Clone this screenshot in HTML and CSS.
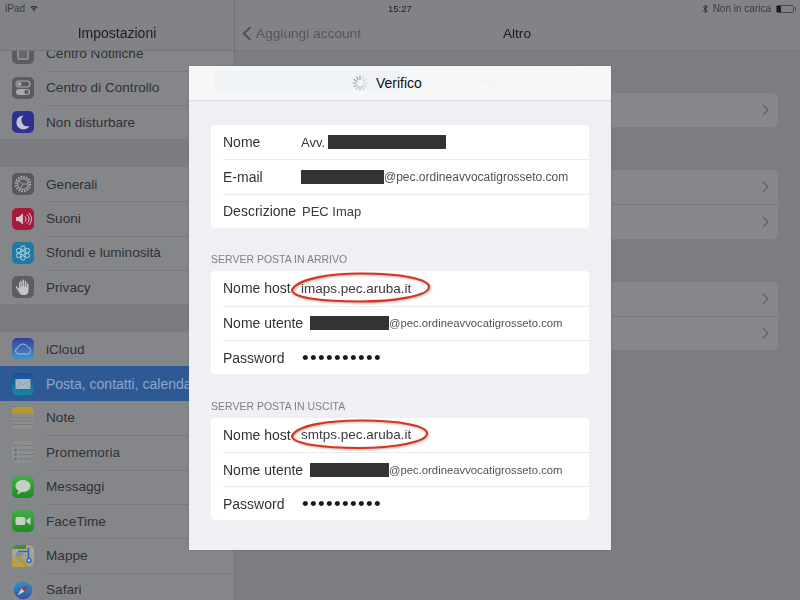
FILE: index.html
```html
<!DOCTYPE html>
<html lang="it">
<head>
<meta charset="utf-8">
<title>Impostazioni</title>
<link rel="stylesheet" href="styles.css">
</head>
<body>
<div class="screen">
  <aside class="sidebar">
    <header class="side-head">
      <div class="status status-left">
        <span>iPad</span>
        <svg class="wifi" viewBox="0 0 10 8"><path d="M0.5 2.6C3 .4 7 .4 9.5 2.6L8.6 3.6C6.6 1.9 3.4 1.9 1.4 3.6ZM2.3 4.5C3.9 3.2 6.1 3.2 7.7 4.5L6.8 5.4C5.7 4.6 4.3 4.6 3.2 5.4ZM5 7.6L3.9 6.4C4.6 5.9 5.4 5.9 6.1 6.4Z"/></svg>
      </div>
      <div class="nav-title">Impostazioni</div>
    </header>
    <div class="side-list">
      <div class="group group-first">
        <div class="item"><svg class="icon" viewBox="0 0 22 22"><rect width="22" height="22" rx="5" fill="#5b5c5f"/><rect x="5" y="4" width="12" height="14" rx="2" fill="#8a8b8d"/><rect x="7" y="6" width="8" height="10" fill="#66676a"/></svg><span class="label">Centro Notifiche</span></div>
        <div class="item"><svg class="icon" viewBox="0 0 22 22"><rect width="22" height="22" rx="5" fill="#5b5c5f"/><rect x="4" y="4" width="14" height="6" rx="3" fill="none" stroke="#a9aaac" stroke-width="1.2"/><circle cx="7.5" cy="7" r="2" fill="#a9aaac"/><rect x="4" y="12" width="14" height="6" rx="3" fill="#a9aaac"/><circle cx="14.5" cy="15" r="2.2" fill="#5b5c5f"/></svg><span class="label">Centro di Controllo</span></div>
        <div class="item"><svg class="icon" viewBox="0 0 22 22"><rect width="22" height="22" rx="5" fill="#2f3190"/><path d="M11.5 4.5A7 7 0 1 0 17.5 15A6.2 6.2 0 0 1 11.5 4.5Z" fill="#c4c5d6"/></svg><span class="label">Non disturbare</span></div>
      </div>
      <div class="group">
        <div class="item"><svg class="icon" viewBox="0 0 22 22"><rect width="22" height="22" rx="5" fill="#58595c"/><circle cx="11" cy="11" r="7" fill="none" stroke="#a3a4a6" stroke-width="2.6" stroke-dasharray="1.6 1.15"/><circle cx="11" cy="11" r="5.2" fill="none" stroke="#a3a4a6" stroke-width="1"/><path d="M11 11L6.8 8M11 11L15.8 11M11 11L8.5 15.4" stroke="#a3a4a6" stroke-width=".9"/></svg><span class="label">Generali</span></div>
        <div class="item"><svg class="icon" viewBox="0 0 22 22"><rect width="22" height="22" rx="5" fill="#a81a3c"/><path d="M4 9H6.5L11 5.5V16.5L6.5 13H4Z" fill="#d8c5cb"/><path d="M13 8.5A3.5 3.5 0 0 1 13 13.5M15 6.5A6 6 0 0 1 15 15.5M17 5A8.5 8.5 0 0 1 17 17" fill="none" stroke="#d8c5cb" stroke-width="1"/></svg><span class="label">Suoni</span></div>
        <div class="item"><svg class="icon" viewBox="0 0 22 22"><rect width="22" height="22" rx="5" fill="#1f7ba6"/><g fill="none" stroke="#b9d3df" stroke-width="1"><circle cx="11" cy="11" r="2"/><circle cx="11" cy="6" r="2.2"/><circle cx="11" cy="16" r="2.2"/><circle cx="6.6" cy="8.5" r="2.2"/><circle cx="15.4" cy="8.5" r="2.2"/><circle cx="6.6" cy="13.5" r="2.2"/><circle cx="15.4" cy="13.5" r="2.2"/></g></svg><span class="label">Sfondi e luminosità</span></div>
        <div class="item"><svg class="icon" viewBox="0 0 22 22"><rect width="22" height="22" rx="5" fill="#5d5e61"/><path d="M7 6.5V13L5 10.5C4.2 9.8 3.4 10.6 4 11.5L7.5 17C8.3 18.3 9.5 19 11 19H12.5C15 19 16.5 17.2 16.5 15V8C16.5 6.9 15 6.9 15 8V11H14.4V5.5C14.4 4.4 12.9 4.4 12.9 5.5V10.5H12.2V4.2C12.2 3.1 10.6 3.1 10.6 4.2V10.5H9.9V5.5C9.9 4.4 8.4 4.4 8.4 5.5V11.5H7.9V6.5C7.9 5.7 7 5.7 7 6.5Z" fill="#c4c5c6"/></svg><span class="label">Privacy</span></div>
      </div>
      <div class="group">
        <div class="item"><svg class="icon" viewBox="0 0 22 22"><defs><linearGradient id="gc" x1="0" y1="0" x2="0" y2="1"><stop offset="0" stop-color="#3340a0"/><stop offset="1" stop-color="#4b97c6"/></linearGradient></defs><rect width="22" height="22" rx="5" fill="url(#gc)"/><path d="M6.500 16A3.200 3.200 0 0 1 6 9.700A5.200 5.200 0 0 1 15.800 9.200A3.500 3.500 0 0 1 16 16Z" fill="none" stroke="#a8bed9" stroke-width="1"/></svg><span class="label">iCloud</span></div>
        <div class="item item-active"><svg class="icon" viewBox="0 0 22 22"><defs><linearGradient id="gm" x1="0" y1="0" x2="0" y2="1"><stop offset="0" stop-color="#1b4d9c"/><stop offset="1" stop-color="#118ba0"/></linearGradient></defs><rect width="22" height="22" rx="5" fill="url(#gm)"/><rect x="3.500" y="6" width="15" height="10" fill="#a9b6c4"/><path d="M3.500 6L11 12L18.500 6M3.500 16L8.500 10.500M18.500 16L13.500 10.500" fill="none" stroke="#7f93a8" stroke-width=".7"/></svg><span class="label label-active">Posta, contatti, calendari</span></div>
        <div class="item"><svg class="icon" viewBox="0 0 22 22"><rect width="22" height="22" rx="5" fill="#8d8e90"/><path d="M0 6V5A5 5 0 0 1 5 0H17A5 5 0 0 1 22 5V6Z" fill="#b89a2c"/><path d="M0 10.500H22M0 14H22M0 17.500H22" stroke="#76777a" stroke-width=".8"/></svg><span class="label">Note</span></div>
        <div class="item"><svg class="icon" viewBox="0 0 22 22"><rect width="22" height="22" rx="5" fill="#8d8e90"/><circle cx="3.500" cy="4.500" r="1.300" fill="#b9722a"/><circle cx="3.500" cy="9" r="1.300" fill="#2e80b8"/><circle cx="3.500" cy="13.500" r="1.300" fill="#3c9a3a"/><circle cx="3.500" cy="18" r="1.300" fill="#8f4ca8"/><path d="M7 4.500H22M7 9H22M7 13.500H22M7 18H22" stroke="#717275" stroke-width=".8"/></svg><span class="label">Promemoria</span></div>
        <div class="item"><svg class="icon" viewBox="0 0 22 22"><defs><linearGradient id="gg" x1="0" y1="0" x2="0" y2="1"><stop offset="0" stop-color="#45a94a"/><stop offset="1" stop-color="#1d8f22"/></linearGradient></defs><rect width="22" height="22" rx="5" fill="url(#gg)"/><path d="M11 4C6.800 4 3.500 6.600 3.500 10C3.500 12 4.700 13.700 6.500 14.800C6.400 16 5.800 17.200 4.800 18C6.600 17.900 8.200 17.100 9.300 15.900C9.900 16 10.400 16 11 16C15.200 16 18.500 13.400 18.500 10C18.500 6.600 15.200 4 11 4Z" fill="#c6cec6"/></svg><span class="label">Messaggi</span></div>
        <div class="item"><svg class="icon" viewBox="0 0 22 22"><rect width="22" height="22" rx="5" fill="url(#gg)"/><rect x="3.500" y="7" width="10" height="8" rx="2" fill="#c6cec6"/><path d="M14.500 10L18.500 7V15L14.500 12Z" fill="#c6cec6"/></svg><span class="label">FaceTime</span></div>
        <div class="item"><svg class="icon" viewBox="0 0 22 22"><rect width="22" height="22" rx="5" fill="#a4a091"/><path d="M0 5A5 5 0 0 1 5 0H14V4H0Z" fill="#4a8a3a"/><path d="M0 4H22V9H0Z" fill="#a8a8a0"/><path d="M0 12L12 22H3A3 3 0 0 1 0 19Z" fill="#b8a238"/><path d="M3 11L13 22H17L6 9Z" fill="#b09a30"/><path d="M14 0V4H16V0Z" fill="#b4a640"/><path d="M16.500 3V15" stroke="#2a66b0" stroke-width="1.500"/><path d="M6 6.500H16.500" stroke="#2a66b0" stroke-width="1.500"/><ellipse cx="7.500" cy="9" rx="3.600" ry="2.200" fill="#7c8fb8"/><circle cx="17" cy="15.500" r="2" fill="#c6cad2" stroke="#1f5aa8" stroke-width="1.200"/></svg><span class="label">Mappe</span></div>
        <div class="item"><svg class="icon" viewBox="0 0 22 22"><defs><linearGradient id="gs" x1="0" y1="0" x2="0" y2="1"><stop offset="0" stop-color="#2f96c8"/><stop offset="1" stop-color="#3552a8"/></linearGradient></defs><rect width="22" height="22" rx="5" fill="#88898b"/><circle cx="11" cy="11" r="9.300" fill="url(#gs)"/><path d="M16.500 5.500L9.500 9.500L12.500 12.500Z" fill="#b8302a"/><path d="M5.500 16.500L9.500 9.500L12.500 12.500Z" fill="#c9ccd2"/></svg><span class="label">Safari</span></div>
      </div>
    </div>
  </aside>

  <main class="pane">
    <header class="pane-head">
      <div class="status status-bar">
        <span class="time">15:27</span>
        <span class="status-right">
          <svg class="bt" viewBox="0 0 8 12"><path d="M1 3.200L6.200 8.400L3.800 10.800V1.200L6.200 3.600L1 8.800" fill="none" stroke="#2d2e30" stroke-width="1.100"/></svg>
          <span>Non in carica</span>
          <span class="battery"><span class="battery-level"></span></span>
        </span>
      </div>
      <div class="pane-nav">
        <div class="back">
          <svg class="back-icon" viewBox="0 0 10 16"><path d="M8.600 1.200L1.600 8L8.600 14.800" fill="none" stroke="#4c4d50" stroke-width="2"/></svg>
          <span>Aggiungi account</span>
        </div>
        <div class="pane-title">Altro</div>
      </div>
    </header>
    <div class="pane-body">
      <div class="bg-card"><div class="bg-row"><svg class="chev" viewBox="0 0 7 12"><path d="M1 1L6 6L1 11" fill="none" stroke="#626366" stroke-width="1.300"/></svg></div></div>
      <div class="bg-card"><div class="bg-row"><svg class="chev" viewBox="0 0 7 12"><path d="M1 1L6 6L1 11" fill="none" stroke="#626366" stroke-width="1.300"/></svg></div><div class="bg-row bg-row-next"><svg class="chev" viewBox="0 0 7 12"><path d="M1 1L6 6L1 11" fill="none" stroke="#626366" stroke-width="1.300"/></svg></div></div>
      <div class="bg-card"><div class="bg-row"><svg class="chev" viewBox="0 0 7 12"><path d="M1 1L6 6L1 11" fill="none" stroke="#626366" stroke-width="1.300"/></svg></div><div class="bg-row bg-row-next"><svg class="chev" viewBox="0 0 7 12"><path d="M1 1L6 6L1 11" fill="none" stroke="#626366" stroke-width="1.300"/></svg></div></div>
    </div>
  </main>

  <section class="modal">
    <header class="modal-head">
      <div class="segments">
        <span class="seg seg-on">IMAP</span>
        <span class="seg seg-off">POP</span>
      </div>
      <div class="modal-title">
        <svg class="spinner" viewBox="0 0 16 16"><g stroke="#8f8f92" stroke-width="1.100" stroke-linecap="round"><path d="M8 1V4.200"/><path d="M11.500 2L9.900 4.700" opacity=".25"/><path d="M14 4.500L11.300 6.100" opacity=".3"/><path d="M15 8H11.800" opacity=".35"/><path d="M14 11.500L11.300 9.900" opacity=".4"/><path d="M11.500 14L9.900 11.300" opacity=".5"/><path d="M8 15V11.800" opacity=".6"/><path d="M4.500 14L6.100 11.300" opacity=".7"/><path d="M2 11.500L4.700 9.900" opacity=".8"/><path d="M1 8H4.200" opacity=".85"/><path d="M2 4.500L4.700 6.100" opacity=".9"/><path d="M4.500 2L6.100 4.700" opacity=".95"/></g></svg>
        <span>Verifico</span>
      </div>
    </header>
    <div class="modal-body">
      <div class="card">
        <div class="row"><span class="key key-a">Nome</span><span class="val">Avv.</span><span class="redact redact-name"></span></div>
        <div class="row"><span class="key key-a">E-mail</span><span class="redact redact-mail"></span><span class="val-mail">@pec.ordineavvocatigrosseto.com</span></div>
        <div class="row"><span class="key key-d">Descrizione</span><span class="val">PEC Imap</span></div>
      </div>
      <div class="section-label">SERVER POSTA IN ARRIVO</div>
      <div class="card">
        <div class="row"><span class="key key-a">Nome host</span><span class="val val-host">imaps.pec.aruba.it</span></div>
        <div class="row"><span class="key key-u">Nome utente</span><span class="redact redact-user"></span><span class="val-user">@pec.ordineavvocatigrosseto.com</span></div>
        <div class="row"><span class="key key-d">Password</span><span class="dots">••••••••••</span></div>
      </div>
      <div class="section-label">SERVER POSTA IN USCITA</div>
      <div class="card">
        <div class="row"><span class="key key-a">Nome host</span><span class="val val-host">smtps.pec.aruba.it</span></div>
        <div class="row"><span class="key key-u">Nome utente</span><span class="redact redact-user"></span><span class="val-user">@pec.ordineavvocatigrosseto.com</span></div>
        <div class="row"><span class="key key-d">Password</span><span class="dots">••••••••••</span></div>
      </div>
    </div>
    <svg class="marks" viewBox="0 0 422 484">
      <path d="M103 224C108 213 140 207.500 172 207.500C212 207.500 240 213 240 221C240 230 205 235.500 170 235.500C135 235.500 103 232 103 224Z"/>
      <path d="M103 370C108 359 140 354.500 172 354.500C212 354.500 238 360 238 367.500C238 376 205 382 170 382C135 382 103 378 103 370Z"/>
    </svg>
  </section>
</div>
</body>
</html>
```

FILE: styles.css
```css
* { box-sizing: border-box; }
html, body { margin: 0; padding: 0; }
body { font-family: "Liberation Sans", Arial, sans-serif; color: #2a2a2c; background: #7c7d81; }
.screen { position: relative; display: flex; width: 800px; height: 600px; overflow: hidden; filter: blur(0.45px); }

.sidebar { width: 235px; height: 600px; display: flex; flex-direction: column; border-right: 1px solid #6f7073; background: #7b7c80; }
.side-head { position: relative; z-index: 1; height: 51px; flex: none; background: #828386; border-bottom: 1px solid #747578; }
.status { font-size: 10px; color: #3a3b3d; }
.status-left { height: 17px; display: flex; align-items: center; gap: 5px; padding-left: 5px; }
.wifi { width: 8px; height: 7px; fill: #2d2e30; }
.nav-title { text-align: center; font-size: 14px; line-height: 16px; margin-top: 8px; color: #1d1d1f; }

.side-list { flex: 1; min-height: 0; overflow: hidden; }
.group { margin-top: 27.5px; background: #85868a; }
.group-first { margin-top: -14.75px; }
.item { position: relative; height: 34.4px; padding-left: 12px; display: flex; align-items: center; gap: 12px; }
.item + .item::before { content: ""; position: absolute; left: 46px; right: 0; top: 0; height: 1px; background: #78797c; }
.icon { width: 22px; height: 22px; flex: none; }
.label { font-size: 13.6px; white-space: nowrap; color: #313133; }
.item-active { background: #2d5a94; }
.item-active::before, .item-active + .item::before { display: none; }
.label-active { font-size: 14px; color: #8ea6c8; }

.pane { flex: 1; min-width: 0; display: flex; flex-direction: column; }
.pane-head { height: 51px; flex: none; background: #828386; border-bottom: 1px solid #747578; }
.status-bar { position: relative; height: 17px; display: flex; align-items: center; justify-content: flex-end; padding-right: 5px; }
.time { position: absolute; left: 153px; top: 4px; line-height: 10px; font-size: 9.5px; color: #1f1f21; }
.status-right { display: flex; align-items: center; gap: 4px; }
.bt { width: 7px; height: 10px; }
.battery { position: relative; width: 18px; height: 8px; border: 1px solid #47484b; border-radius: 1.5px; margin-left: 1px; margin-right: 1px; display: block; }
.battery::after { content: ""; position: absolute; right: -3px; top: 1px; width: 1.5px; height: 4px; background: #47484b; }
.battery-level { display: block; width: 4px; height: 6px; background: #1c1c1e; }
.pane-nav { position: relative; display: flex; align-items: center; height: 16px; margin-top: 8px; padding-left: 7px; }
.back { display: flex; align-items: center; gap: 4px; font-size: 13.7px; color: #56575a; }
.back-icon { width: 10px; height: 15px; }
.pane-title { position: absolute; left: 268px; font-size: 13.6px; color: #1d1d1f; }

.pane-body { flex: 1; padding: 42px 22px 0; display: flex; flex-direction: column; gap: 43px; }
.bg-card { background: #86878a; border-radius: 4px; }
.bg-row { height: 34.2px; display: flex; align-items: center; justify-content: flex-end; padding-right: 9px; }
.bg-row-next { border-top: 1px solid #78797c; }
.chev { width: 7px; height: 12px; }

.modal { position: absolute; left: 189px; top: 66px; width: 422px; height: 484px; background: #efeff4; box-shadow: 0 0 1px #55565a; }
.modal-head { position: relative; height: 35px; background: #f7f7f7; border-bottom: 1px solid #dcdcde; }
.segments { display: flex; padding: 4px 27px 0 26px; }
.seg { flex: 1; height: 21px; font-size: 10px; line-height: 21px; text-align: center; }
.seg-on { background: #eff3f8; color: #f3f6fa; border-radius: 3px 0 0 3px; }
.seg-off { background: #f6f7f8; color: #f0f3f7; border: 1px solid #f1f3f6; border-radius: 0 3px 3px 0; }
.modal-title { position: absolute; left: 163px; top: 9px; display: flex; align-items: center; gap: 8px; font-size: 14px; line-height: 16px; color: #111; }
.spinner { width: 16px; height: 16px; }

.modal-body { padding: 24px 22px 0; }
.card { background: #fff; border-radius: 4px; overflow: hidden; }
.row { height: 34.3px; display: flex; align-items: center; padding-left: 12px; position: relative; font-size: 14px; white-space: nowrap; color: #333; }
.row + .row { border-top: 1px solid #ececee; margin-left: 12px; padding-left: 0; }
.key { flex: none; }
.key-a { width: 78px; }
.key-d { width: 79px; }
.key-u { width: 87px; }
.val { font-size: 13px; color: #3a3a3c; }
.val-host { font-size: 13.5px; }
.val-mail { font-size: 12px; color: #525254; }
.val-user { font-size: 11.3px; color: #525254; }
.redact { display: block; height: 14px; background: #333; }
.redact-name { width: 118px; margin-left: 3px; }
.redact-mail { width: 83px; }
.redact-user { width: 79px; }
.dots { font-size: 19px; line-height: 20px; letter-spacing: 1.35px; color: #1b1b1d; }
.section-label { height: 43.4px; padding-top: 25.5px; font-size: 10.5px; line-height: 13px; color: #7f7f84; }

.marks { position: absolute; left: 0; top: 0; width: 422px; height: 484px; overflow: visible; filter: drop-shadow(1px 1px 1px rgba(0,0,0,.3)); }
.marks path { fill: none; stroke: #d9341c; stroke-width: 2.1; }
```
